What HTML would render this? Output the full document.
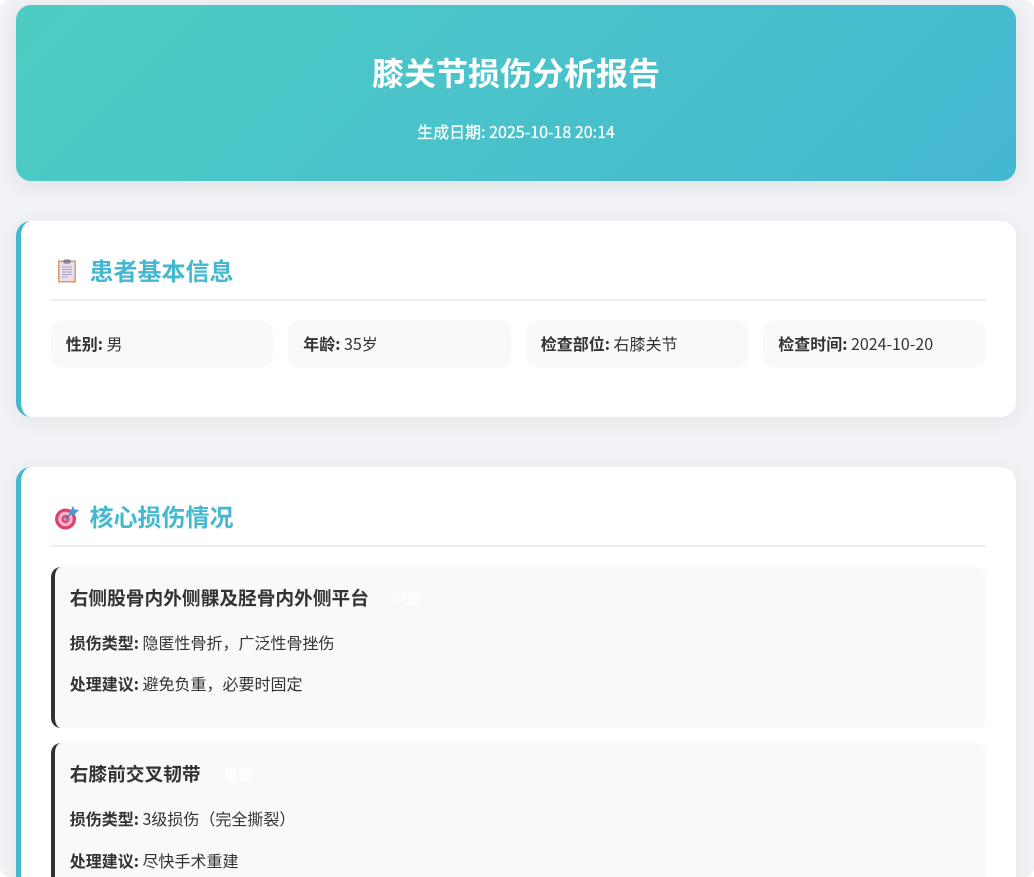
<!DOCTYPE html>
<html lang="zh-CN">
<head>
<meta charset="utf-8">
<title>膝关节损伤分析报告</title>
<style>
*{box-sizing:border-box;margin:0;padding:0}
html,body{width:1034px;height:877px;overflow:hidden;background:#f0f2f5}
body{font-family:"Noto Sans CJK SC","Liberation Sans",sans-serif;color:#333;font-size:16px;line-height:25.6px;position:relative}
.header{position:absolute;left:16px;top:5px;width:1000px;height:176px;border-radius:15px;background:linear-gradient(135deg,#4ecdc4,#45b7d1);color:#fff;text-align:center;box-shadow:0 4px 20px rgba(0,0,0,.08)}
.header h1{position:absolute;left:0;right:0;top:42px;font-size:32px;line-height:51px;font-weight:700}
.header p{position:absolute;left:0;right:0;top:113px;font-size:16px;line-height:26px;font-weight:400;-webkit-text-stroke:.25px #fff}
.card{position:absolute;left:16px;width:1000px;background:#fff;border-left:5px solid #45b7d1;border-radius:15px;box-shadow:0 4px 20px rgba(0,0,0,.05)}
.card h2{position:absolute;left:30px;right:30px;top:30px;height:50px;border-bottom:2px solid #eee;color:#45b7d1;font-size:24px;line-height:38px;font-weight:700;padding-left:38.500px}
.card h2 svg{position:absolute;left:4px;top:7px}
.grid{position:absolute;left:29.700px;top:100px;width:935.300px;display:grid;grid-template-columns:repeat(4,222.500px);gap:15px}
.grid div{height:46px;background:#f8f9fa;border-radius:10px;padding:10px 15px}
.inj{position:absolute;left:30px;width:935px;background:#f8f9fa;border-left:4.500px solid #333;border-radius:10px;padding:15px 0 0 14.700px}
.inj h3{font-size:18.720px;line-height:30px;font-weight:700;color:#333;margin-bottom:16px;padding-top:1px;height:32px}
.inj h3 span{color:#fff;font-size:14.400px;font-weight:700;padding:0 10px;margin-left:13px;position:relative;top:-1px}
.inj p{margin-bottom:16px}
.c{position:absolute;width:10px;height:10px}
</style>
</head>
<body>
<div class="header">
<h1>膝关节损伤分析报告</h1>
<p>生成日期: 2025-10-18 20:14</p>
</div>
<div class="card" style="top:221px;height:196px">
<h2><svg width="24" height="24" viewBox="0 0 24 24" style="left:4px;top:8px"><rect x="3" y="1.500" width="18" height="22" fill="#e09b66"/><rect x="4.500" y="3" width="15" height="19" fill="#e6dff0"/><path d="M14.500 22l5-5v5z" fill="#f4d9c0"/><rect x="8.500" y="0.500" width="7" height="4" rx="1" fill="#8a7f8c"/><path d="M7 8h10M7 10.500h10M7 13h10M7 15.500h10M7 18h6" stroke="#a9a2b8" stroke-width="1"/></svg>患者基本信息</h2>
<div class="grid">
<div><b>性别:</b> 男</div>
<div><b>年龄:</b> 35岁</div>
<div><b>检查部位:</b> 右膝关节</div>
<div><b>检查时间:</b> 2024-10-20</div>
</div>
</div>
<div class="card" style="top:467px;height:410px;border-radius:15px 15px 0 0">
<h2><svg width="25" height="25" viewBox="0 0 25 25" style="left:4px;top:8px"><circle cx="10.500" cy="14" r="10.500" fill="#e2406f"/><circle cx="10.500" cy="14" r="7.200" fill="#eeb9cf"/><circle cx="10.500" cy="14" r="4" fill="#e2406f"/><circle cx="10.500" cy="14" r="1.800" fill="#c9a6b4"/><path d="M10.500 14L19 5.500" stroke="#3f7fb5" stroke-width="1.500"/><path d="M14.500 7.500L18 1l1.500 3.500 4.500.5-5 5-3.500-.5z" fill="#3f9fe0"/></svg>核心损伤情况</h2>
<div class="inj" style="top:100px;height:161px">
<h3>右侧股骨内外侧髁及胫骨内外侧平台<span>中度</span></h3>
<p><b>损伤类型:</b> 隐匿性骨折，广泛性骨挫伤</p>
<p style="margin-top:-.8px"><b>处理建议:</b> 避免负重，必要时固定</p>
</div>
<div class="inj" style="top:276px;height:134px;border-radius:10px 10px 0 0">
<h3>右膝前交叉韧带<span>重度</span></h3>
<p><b>损伤类型:</b> 3级损伤（完全撕裂）</p>
<p><b>处理建议:</b> 尽快手术重建</p>
</div>
</div>
<svg class="c" style="left:0;top:0" viewBox="0 0 10 10"><path d="M0 0h10A10 10 0 0 0 0 10z" fill="#fff"/></svg>
<svg class="c" style="right:0;top:0" viewBox="0 0 10 10"><path d="M10 0v10A10 10 0 0 0 0 0z" fill="#fff"/></svg>
<svg class="c" style="left:0;bottom:0" viewBox="0 0 10 10"><path d="M0 10V0A10 10 0 0 0 10 10z" fill="#fff"/></svg>
<svg class="c" style="right:0;bottom:0" viewBox="0 0 10 10"><path d="M10 10H0A10 10 0 0 0 10 0z" fill="#fff"/></svg>
</body>
</html>
